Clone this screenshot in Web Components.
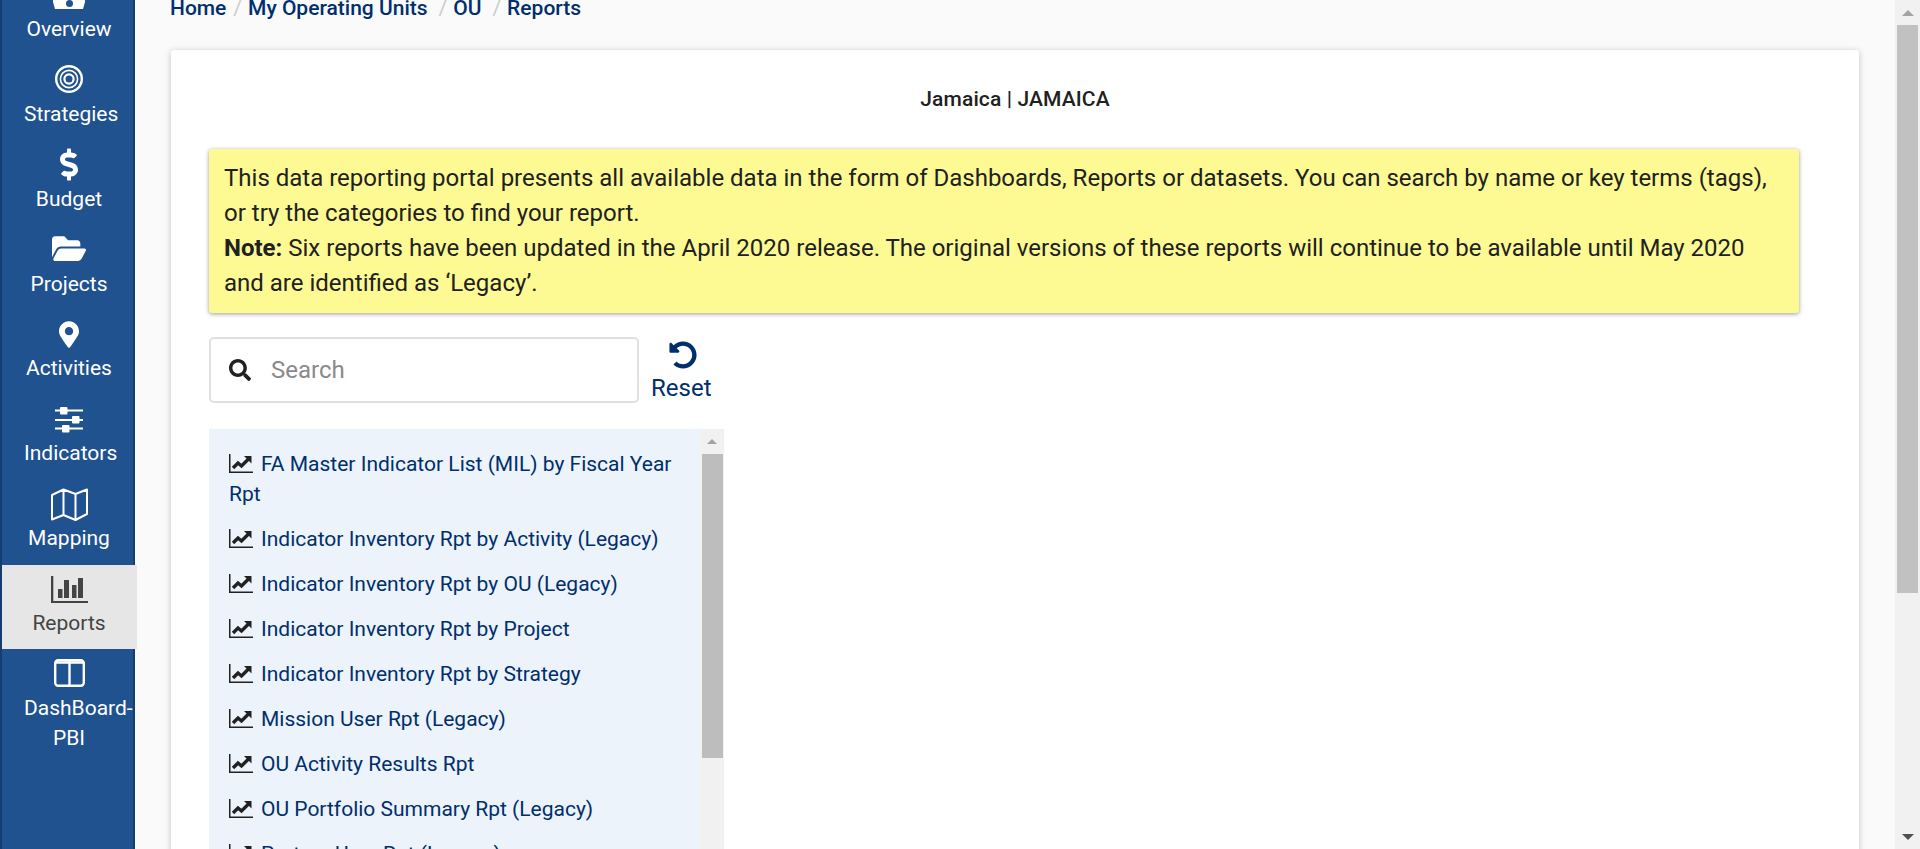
<!DOCTYPE html>
<html lang="en">
<head>
<meta charset="utf-8">
<title>Reports</title>
<style>
html, body { margin: 0; height: 100%; overflow: hidden; }
body { font-family: Roboto, "Liberation Sans", sans-serif; background: #fafafa; }
</style>
</head>
<body>
<app-shell>
  <side-nav slot="nav">
    <nav-item label="Overview" icon="overview"></nav-item>
    <nav-item label="Strategies" icon="target"></nav-item>
    <nav-item label="Budget" icon="dollar"></nav-item>
    <nav-item label="Projects" icon="folder"></nav-item>
    <nav-item label="Activities" icon="marker"></nav-item>
    <nav-item label="Indicators" icon="sliders"></nav-item>
    <nav-item label="Mapping" icon="map"></nav-item>
    <nav-item label="Reports" icon="bars" active></nav-item>
    <nav-item label="DashBoard-PBI" icon="columns"></nav-item>
  </side-nav>
  <bread-crumbs>
    <a>Home</a><a>My Operating Units</a><a>OU</a><a>Reports</a>
  </bread-crumbs>
  <report-card heading="Jamaica | JAMAICA">
    <note-box>
      This data reporting portal presents all available data in the form of Dashboards, Reports or datasets. You can search by name or key terms (tags), or try the categories to find your report.<br>
      <b>Note:</b> Six reports have been updated in the April 2020 release. The original versions of these reports will continue to be available until May 2020 and are identified as ‘Legacy’.
    </note-box>
    <search-bar></search-bar>
    <report-list>
      <report-item>FA Master Indicator List (MIL) by Fiscal Year Rpt</report-item>
      <report-item>Indicator Inventory Rpt by Activity (Legacy)</report-item>
      <report-item>Indicator Inventory Rpt by OU (Legacy)</report-item>
      <report-item>Indicator Inventory Rpt by Project</report-item>
      <report-item>Indicator Inventory Rpt by Strategy</report-item>
      <report-item>Mission User Rpt (Legacy)</report-item>
      <report-item>OU Activity Results Rpt</report-item>
      <report-item>OU Portfolio Summary Rpt (Legacy)</report-item>
      <report-item>Partner User Rpt (Legacy)</report-item>
    </report-list>
  </report-card>
</app-shell>

<script>
const ICONS = {
  overview: `<svg style="margin-bottom:6px" width="32" height="38" viewBox="0 0 32 38" fill="#fff"><path d="M2 38 0 31V24a16 16 0 0 1 32 0v7l-2 7z"/><circle cx="16.500" cy="32.500" r="3.500" fill="#20528f"/></svg>`,
  target: `<svg style="margin-bottom:6px" width="28" height="28" viewBox="0 0 28 28" fill="none" stroke="#fff"><circle cx="14" cy="14" r="12.800" stroke-width="2.400"/><circle cx="14" cy="14" r="8.600" stroke-width="1.600"/><circle cx="14" cy="14" r="4.600" stroke-width="2.200"/></svg>`,
  dollar: `<svg style="margin-bottom:3px" width="18" height="33" viewBox="0 0 288 512" fill="#fff"><path d="M209.2 233.4l-108-31.6C88.7 198.2 80 186.5 80 173.5c0-16.3 13.2-29.5 29.5-29.5h66.3c12.2 0 24.2 3.7 34.2 10.5 6.1 4.1 14.3 3.1 19.5-2l34.8-34c7.1-6.9 6.1-18.4-1.8-24.5C238 74.8 207.4 64.1 176 64V16c0-8.8-7.2-16-16-16h-32c-8.8 0-16 7.2-16 16v48h-2.5C45.8 64-5.4 118.7.5 183.6c4.2 46.1 39.4 83.6 83.8 96.6l102.5 30c12.5 3.7 21.2 15.3 21.2 28.3 0 16.3-13.2 29.5-29.5 29.5h-66.3C100 368 88 364.3 78 357.5c-6.1-4.1-14.3-3.1-19.5 2l-34.8 34c-7.1 6.9-6.1 18.4 1.8 24.5 24.5 19.2 55.1 29.9 86.5 30v48c0 8.8 7.2 16 16 16h32c8.8 0 16-7.2 16-16v-48.2c46.6-.9 90.3-28.6 105.7-72.7 21.5-61.6-14.6-124.8-72.5-141.7z"/></svg>`,
  folder: `<svg style="margin-bottom:4px" width="34" height="33" viewBox="0 0 576 512" preserveAspectRatio="none" fill="#fff"><path d="M572.694 292.093L500.27 416.248A63.997 63.997 0 0 1 444.989 448H45.025c-18.523 0-30.064-20.093-20.731-36.093l72.424-124.155A64 64 0 0 1 152 256h399.964c18.523 0 30.064 20.093 20.73 36.093zM152 224h328v-48c0-26.51-21.49-48-48-48H272l-64-64H48C21.49 64 0 85.49 0 112v278.046l69.077-118.418C86.214 242.25 117.989 224 152 224z"/></svg>`,
  marker: `<svg style="margin-bottom:6px" width="20" height="27" viewBox="0 0 384 512" fill="#fff"><path d="M172.268 501.67C26.97 291.031 0 256.311 0 192 0 85.961 85.961 0 192 0s192 85.961 192 192c0 64.311-26.97 99.031-172.268 309.67-9.535 13.774-29.93 13.773-39.464 0zM192 272c44.183 0 80-35.817 80-80s-35.817-80-80-80-80 35.817-80 80 35.817 80 80 80z"/></svg>`,
  sliders: `<svg style="margin-bottom:6px" width="28" height="26" viewBox="0 0 28 26" fill="#fff"><rect y="2.500" width="28" height="2"/><rect y="12" width="28" height="2"/><rect y="20.500" width="28" height="2"/><rect x="5" y="0" width="7.500" height="7.500" rx="1"/><rect x="17" y="9" width="7.500" height="7.500" rx="1"/><rect x="7" y="18" width="7.500" height="7.500" rx="1"/></svg>`,
  map: `<svg style="margin-bottom:3px" width="37" height="33" viewBox="0 0 37 33" fill="none" stroke="#fff" stroke-width="2" stroke-linejoin="round"><path d="M1 7 12.500 1.500 24.500 6 36 1.500v24.500L24.500 32 12.500 27 1 31.500zM12.500 1.500V27M24.500 6v26"/></svg>`,
  bars: `<svg style="margin-bottom:6px" width="37" height="27" viewBox="0 0 37 27" fill="#444"><rect width="2.300" height="27"/><rect y="25" width="37" height="2"/><rect x="7" y="13" width="4.500" height="9"/><rect x="13" y="4" width="5" height="18"/><rect x="21" y="9" width="4.500" height="13"/><rect x="27" y="2" width="5" height="20"/></svg>`,
  columns: `<svg style="margin-bottom:6px" width="31" height="28" viewBox="0 0 31 28" fill="none" stroke="#fff" stroke-width="2.400"><rect x="1.200" y="1.200" width="28.600" height="25.600" rx="3"/><path d="M15.500 2v25M2 3.500h27" /></svg>`
};

class AppShell extends HTMLElement {
  constructor() {
    super();
    this.attachShadow({ mode: "open" });
    this.shadowRoot.innerHTML = `
    <style>
    :host { display: flex; height: 849px; overflow: hidden; }
    main { flex: 1; min-width: 0; padding: 0 36px; }
    .scrollbar { flex: none; width: 25px; background: #f1f1f1; display: flex; flex-direction: column; align-items: center; }
    .arrow { flex: none; height: 25px; display: flex; align-items: center; justify-content: center; }
    .arrow i { width: 0; height: 0; border-left: 6px solid transparent; border-right: 6px solid transparent; }
    .up i { border-bottom: 6px solid #a3a3a3; }
    .thumb { flex: none; width: 21px; height: 568px; background: #c1c1c1; }
    .rest { flex: 1; }
    .down i { border-top: 6px solid #505050; }
    </style>
    <slot name="nav"></slot>
    <main><slot></slot></main>
    <div class="scrollbar">
      <div class="arrow up"><i></i></div>
      <div class="thumb"></div>
      <div class="rest"></div>
      <div class="arrow down"><i></i></div>
    </div>`;
  }
}

class SideNav extends HTMLElement {
  constructor() {
    super();
    this.attachShadow({ mode: "open" });
    this.shadowRoot.innerHTML = `
    <style>
    :host { display: block; flex: none; width: 135px; box-sizing: border-box; background: #20528f;
      border-left: 2px solid #143d70; border-right: 2px solid #143d70; height: 849px; }
    .items { margin-top: -29.500px; }
    </style>
    <div class="items"><slot></slot></div>`;
  }
}

class NavItem extends HTMLElement {
  constructor() {
    super();
    this.attachShadow({ mode: "open" });
    this.shadowRoot.innerHTML = `
    <style>
    :host { display: block; height: 84.860px; color: #fff; font-size: 21px; line-height: 30px; text-align: center; }
    :host([active]) { background: #e6e6e6; color: #444; width: 135px; }
    .icon, .label { width: 90px; margin-left: 22px; }
    .icon { height: 44px; display: flex; align-items: flex-end; justify-content: center; }
    .label { margin-top: -.500px; }
    </style>
    <div class="icon"></div>
    <div class="label"></div>`;
  }
  connectedCallback() {
    this.shadowRoot.querySelector(".icon").innerHTML = ICONS[this.getAttribute("icon")] || "";
    this.shadowRoot.querySelector(".label").textContent = this.getAttribute("label");
  }
}

class BreadCrumbs extends HTMLElement {
  constructor() {
    super();
    this.attachShadow({ mode: "open" });
    this.shadowRoot.innerHTML = `
    <style>
    :host { display: block; height: 56px; margin: -6px 0 0 -1px; font-size: 21px; line-height: 28px; color: #002f6c; white-space: nowrap; }
    span { font-weight: 500; }
    .sep { color: #ccc; font-weight: 400; padding: 0 6px 0 7px; }
    .sep.wide { padding-left: 11px; }
    </style>
    <div id="out"></div>`;
  }
  connectedCallback() {
    const out = this.shadowRoot.getElementById("out");
    out.innerHTML = [...this.querySelectorAll("a")]
      .map((a, i) => (i ? `<span class="sep${i > 1 ? " wide" : ""}">/</span>` : "") + `<span>${a.textContent}</span>`)
      .join("");
  }
}

class ReportCard extends HTMLElement {
  constructor() {
    super();
    this.attachShadow({ mode: "open" });
    this.shadowRoot.innerHTML = `
    <style>
    :host { display: block; background: #fff; border-radius: 3px; box-shadow: 0 1px 6px rgba(0,0,0,.22); padding: 0 60px 0 38px; height: 900px; box-sizing: border-box; }
    h2 { margin: 0 -60px 0 -38px; font-size: 21px; font-weight: 500; letter-spacing: .12px; line-height: 28px; text-align: center; color: #212121; padding: 35px 0 0; height: 99px; box-sizing: border-box; }
    </style>
    <h2></h2>
    <slot></slot>`;
  }
  connectedCallback() {
    this.shadowRoot.querySelector("h2").textContent = this.getAttribute("heading");
  }
}

class NoteBox extends HTMLElement {
  constructor() {
    super();
    this.attachShadow({ mode: "open" });
    this.shadowRoot.innerHTML = `
    <style>
    :host { display: block; box-sizing: border-box; background: #fdfa94; border-radius: 3px; box-shadow: 0 1px 4px rgba(0,0,0,.4); padding: 12px 15px; font-size: 24px; line-height: 35px; color: #212121; }
    </style>
    <slot></slot>`;
  }
}

class SearchBar extends HTMLElement {
  constructor() {
    super();
    this.attachShadow({ mode: "open" });
    this.shadowRoot.innerHTML = `
    <style>
    :host { display: flex; align-items: flex-start; margin-top: 24px; }
    .box { box-sizing: border-box; width: 430px; height: 66px; border: 2px solid #e0e0e0; border-radius: 5px; display: flex; align-items: center; padding-left: 18px; gap: 20px; }
    input { border: 0; outline: 0; flex: 1; min-width: 0; font: 24px Roboto, sans-serif; color: #212121; background: transparent; padding: 0; }
    input::placeholder { color: #8a8a8a; opacity: 1; }
    .reset { margin-left: 12px; display: flex; flex-direction: column; align-items: center; color: #002f6c; font-size: 24px; line-height: 30px; padding-top: 4px; }
    .reset svg { display: block; margin: 0 0 4px 3px; }
    </style>
    <div class="box">
      <svg width="22" height="22" viewBox="0 0 512 512" fill="#212121"><path d="M505 442.7L405.3 343c-4.500-4.500-10.600-7-17-7H372c27.600-35.300 44-79.700 44-128C416 93.100 322.900 0 208 0S0 93.100 0 208s93.100 208 208 208c48.300 0 92.700-16.400 128-44v16.300c0 6.400 2.500 12.500 7 17l99.700 99.700c9.400 9.400 24.600 9.400 33.900 0l28.300-28.300c9.400-9.400 9.400-24.600.1-34zM208 336c-70.700 0-128-57.200-128-128 0-70.700 57.200-128 128-128 70.700 0 128 57.200 128 128 0 70.700-57.200 128-128 128z"/></svg>
      <input placeholder="Search">
    </div>
    <div class="reset">
      <svg width="28" height="28" viewBox="0 0 512 512" fill="#002f6c"><path d="M255.545 8c-66.269.119-126.438 26.233-170.860 68.685L48.971 40.971C33.851 25.851 8 36.559 8 57.941V192c0 13.255 10.745 24 24 24h134.059c21.382 0 32.090-25.851 16.971-40.971l-41.750-41.750c30.864-28.899 70.801-44.907 113.230-45.273 92.398-.798 170.283 73.977 169.484 169.442C423.236 348.009 349.816 424 256 424c-41.127 0-79.997-14.678-110.630-41.556-4.743-4.161-11.906-3.908-16.368.553L89.340 422.659c-4.872 4.872-4.631 12.815.482 17.433C133.798 479.813 192.074 504 256 504c136.966 0 247.999-111.033 248-247.998C504.001 119.193 392.354 7.755 255.545 8z"/></svg>
      <span>Reset</span>
    </div>`;
  }
}

class ReportList extends HTMLElement {
  constructor() {
    super();
    this.attachShadow({ mode: "open" });
    this.shadowRoot.innerHTML = `
    <style>
    :host { display: flex; margin-top: 26px; width: 515px; height: 440px; background: #ecf3fb; }
    .rows { flex: 1; min-width: 0; padding: 20px 4px 0 20px; }
    .scrollbar { flex: none; width: 24px; background: #f1f1f1; display: flex; flex-direction: column; align-items: center; }
    .arrow { flex: none; height: 25px; display: flex; align-items: center; justify-content: center; }
    .arrow i { width: 0; height: 0; border-left: 5px solid transparent; border-right: 5px solid transparent; border-bottom: 5px solid #a3a3a3; }
    .thumb { flex: none; width: 21px; height: 304px; background: #bdbdbd; }
    </style>
    <div class="rows"><slot></slot></div>
    <div class="scrollbar"><div class="arrow"><i></i></div><div class="thumb"></div></div>`;
  }
}

class ReportItem extends HTMLElement {
  constructor() {
    super();
    this.attachShadow({ mode: "open" });
    this.shadowRoot.innerHTML = `
    <style>
    :host { display: block; font-size: 21px; line-height: 30px; color: #002f6c; margin-bottom: 15px; }
    svg { vertical-align: -2px; margin-right: 8px; }
    </style>
    <svg width="24" height="19" viewBox="0 0 24 19" fill="none" stroke="#212121"><path d="M.75 0v18.250H24" stroke-width="1.500"/><path d="M4 14l5-5 3.500 3L19.500 5" stroke-width="3.400"/><path d="M15 2h7.500v7.500z" fill="#212121" stroke="none"/></svg><slot></slot>`;
  }
}

customElements.define("app-shell", AppShell);
customElements.define("side-nav", SideNav);
customElements.define("nav-item", NavItem);
customElements.define("bread-crumbs", BreadCrumbs);
customElements.define("report-card", ReportCard);
customElements.define("note-box", NoteBox);
customElements.define("search-bar", SearchBar);
customElements.define("report-list", ReportList);
customElements.define("report-item", ReportItem);
</script>
</body>
</html>
